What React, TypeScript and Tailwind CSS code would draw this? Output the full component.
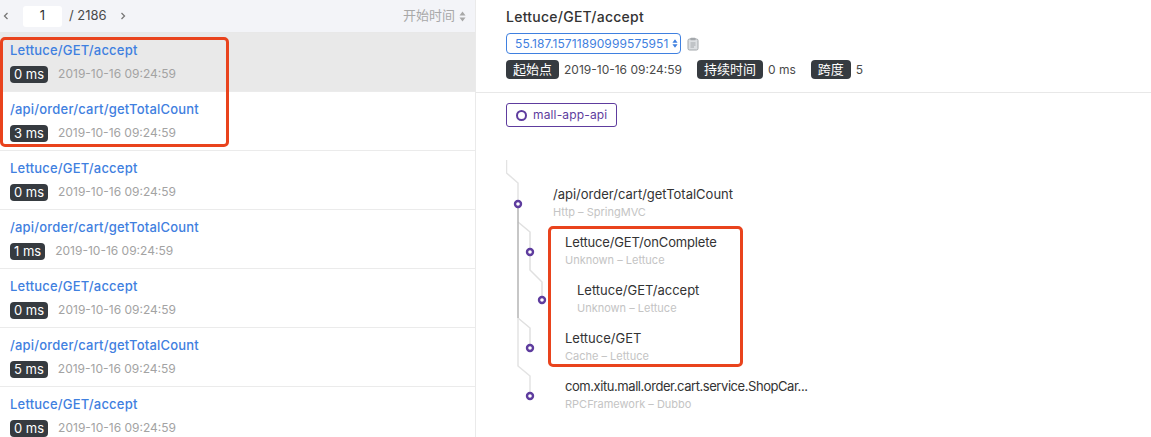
import React from "react";

const FONT = "font-['Inter','Noto_Sans_CJK_SC',sans-serif]";

const rows = [
  ["Lettuce/GET/accept", "0 ms"],
  ["/api/order/cart/getTotalCount", "3 ms"],
  ["Lettuce/GET/accept", "0 ms"],
  ["/api/order/cart/getTotalCount", "1 ms"],
  ["Lettuce/GET/accept", "0 ms"],
  ["/api/order/cart/getTotalCount", "5 ms"],
  ["Lettuce/GET/accept", "0 ms"],
];

const spans = [
  { name: "/api/order/cart/getTotalCount", sub: "Http – SpringMVC", pad: "pl-[47px]", fit: "" },
  { name: "Lettuce/GET/onComplete", sub: "Unknown – Lettuce", pad: "pl-[59px]", fit: "tracking-[-0.15px]" },
  { name: "Lettuce/GET/accept", sub: "Unknown – Lettuce", pad: "pl-[71px]", fit: "" },
  { name: "Lettuce/GET", sub: "Cache – Lettuce", pad: "pl-[59px]", fit: "" },
  { name: "com.xitu.mall.order.cart.service.ShopCar...", sub: "RPCFramework – Dubbo", pad: "pl-[59px]", fit: "tracking-[-0.44px]" },
];

function Tag({ children, ms }: { children: React.ReactNode; ms?: boolean }) {
  return (
    <span
      className={`inline-flex items-center rounded-[4px] bg-[#363b40] text-[13px] leading-none text-white ${ms ? "h-[17px] px-[4px]" : "h-[19px] px-[7px]"}`}
    >
      {children}
    </span>
  );
}

function Tree() {
  const dots = [
    [12, 53],
    [24, 101],
    [36, 149],
    [24, 197],
    [24, 245],
  ];
  return (
    <svg className="absolute left-0 top-0" width="60" height="270" fill="none">
      <path d="M0.5 9V22L12 32V53" stroke="#e3e3e3" strokeWidth="1.5" />
      <path d="M12 71L24 81V119L36 131V149" stroke="#e0e0e0" strokeWidth="1.5" />
      <path d="M12 167L24 177V197" stroke="#e0e0e0" strokeWidth="1.5" />
      <path d="M12 167V215L24 225V245" stroke="#e3e3e3" strokeWidth="1.5" />
      <path d="M12 53V167" stroke="#b5b5b5" strokeWidth="1.5" />
      {dots.map(([x, y]) => (
        <circle key={`${x}-${y}`} cx={x} cy={y} r="3" fill="#fff" stroke="#5e3c9e" strokeWidth="2.4" />
      ))}
    </svg>
  );
}

export default function App() {
  return (
    <div className={`relative flex h-[437px] w-[1151px] overflow-hidden bg-white ${FONT}`}>
      <div className="h-full w-[476px] shrink-0 border-r border-[#eaeaea]">
        <div className="flex h-[33px] items-center border-b border-[#e8e8e8] bg-[#f3f4f8] pr-[9px] text-[13px] text-[#4a4a4a]">
          <svg className="ml-[3px]" width="6" height="8" viewBox="0 0 6 8" fill="none">
            <path d="M4.5 1L1.5 4L4.5 7" stroke="#777" strokeWidth="1.3" />
          </svg>
          <div className="ml-[14px] flex h-[21px] w-[39px] items-center justify-center rounded-[3px] bg-white text-[#333]">1</div>
          <span className="ml-[7px]">/ 2186</span>
          <svg className="ml-[13px]" width="6" height="8" viewBox="0 0 6 8" fill="none">
            <path d="M1.5 1L4.5 4L1.5 7" stroke="#777" strokeWidth="1.3" />
          </svg>
          <span className="ml-auto text-[#a8a8a8]">开始时间</span>
          <svg className="ml-[4px]" width="7" height="11" viewBox="0 0 7 11">
            <path d="M3.5 0.5L6.5 4.5H0.5Z M3.5 10.5L0.5 6.5H6.5Z" fill="#a8a8a8" />
          </svg>
        </div>
        {rows.map(([title, ms], i) => (
          <div
            key={i}
            className={`flex h-[59px] flex-col border-b border-[#ebebeb] pl-[10px] pt-[9px] ${i === 0 ? "bg-[#e9e9e9]" : "bg-white"}`}
          >
            <div className="text-[13px] font-medium leading-[17px] tracking-[0.2px] text-[#3f80e0]">{title}</div>
            <div className="mt-[6px] flex items-center">
              <Tag ms>{ms}</Tag>
              <span className="ml-[10px] text-[12px] text-[#a3a3a3]">2019-10-16 09:24:59</span>
            </div>
          </div>
        ))}
      </div>

      <div className="flex min-w-0 flex-1 flex-col">
        <div className="h-[93px] shrink-0 border-b border-[#e8e8e8] pl-[30px] pt-[7px]">
          <div className="text-[14px] font-medium leading-[19px] tracking-[0.25px] text-[#333]">Lettuce/GET/accept</div>
          <div className="mt-[7px] flex items-center">
            <div className="flex h-[21px] w-[175px] items-center rounded-[4px] border border-[#3f80e0] pl-[8px] text-[12px] tracking-[0.1px] text-[#3f80e0]">
              55.187.15711890999575951
              <svg className="ml-[4px]" width="6" height="11" viewBox="0 0 7 11">
                <path d="M3.5 0.5L6.5 4.5H0.5Z M3.5 10.5L0.5 6.5H6.5Z" fill="#3f80e0" />
              </svg>
            </div>
            <svg className="ml-[6px]" width="12" height="14" viewBox="0 0 12 14" fill="none">
              <rect x="1" y="2" width="10" height="11" rx="1.5" fill="#dcdfe2" stroke="#a4a8ac" />
              <rect x="3.5" y="0.7" width="5" height="2.6" rx="0.6" fill="#a4a8ac" />
              <path d="M3.5 6H8.5M3.5 8H8.5M3.5 10H7" stroke="#a4a8ac" />
            </svg>
          </div>
          <div className="mt-[6px] flex items-center text-[12px] text-[#4a4a4a]">
            <Tag>起始点</Tag>
            <span className="ml-[5px]">2019-10-16 09:24:59</span>
            <span className="ml-[15px] flex"><Tag>持续时间</Tag></span>
            <span className="ml-[5px]">0 ms</span>
            <span className="ml-[15px] flex"><Tag>跨度</Tag></span>
            <span className="ml-[5px]">5</span>
          </div>
        </div>
        <div className="pl-[30px] pt-[10px]">
          <div className="flex h-[24px] w-[111px] items-center rounded-[3px] border border-[#5e3c9e] pl-[9px] text-[12px] tracking-[0.15px] text-[#5e3c9e]">
            <span className="h-[11px] w-[11px] rounded-full border-2 border-[#5e3c9e]" />
            <span className="ml-[6px]">mall-app-api</span>
          </div>
        </div>
        <div className="relative ml-[30px] mt-[24px] flex-1 pt-[34px]">
          <Tree />
          {spans.map((s) => (
            <div key={s.name} className={`h-[48px] ${s.pad}`}>
              <div className={`text-[13px] leading-[18px] text-[#333] ${s.fit}`}>{s.name}</div>
              <div className="mt-[2px] text-[11px] leading-[15px] text-[#c4c4c4]">{s.sub}</div>
            </div>
          ))}
        </div>
      </div>

      <div className="pointer-events-none absolute left-0 top-[37px] h-[110px] w-[229px] rounded-[5px] border-[3px] border-[#e9431d]" />
      <div className="pointer-events-none absolute left-[548px] top-[226px] h-[141px] w-[195px] rounded-[5px] border-[3px] border-[#e9431d]" />
    </div>
  );
}
